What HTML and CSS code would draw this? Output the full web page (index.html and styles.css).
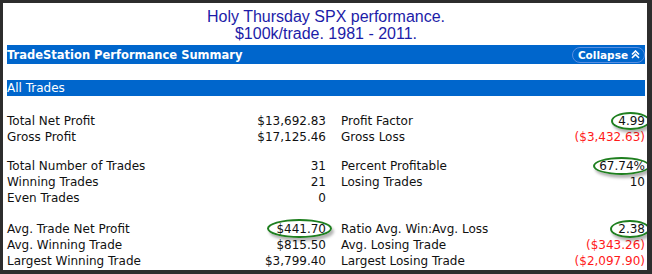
FILE: index.html
```html
<!DOCTYPE html>
<html>
<head>
<meta charset="utf-8">
<link rel="stylesheet" href="styles.css">
</head>
<body>
<div class="frame">
  <div class="title">
    <div>Holy Thursday SPX performance.</div>
    <div>$100k/trade. 1981 - 2011.</div>
  </div>
  <div class="bar head">
    <span class="head-title">TradeStation Performance Summary</span>
    <span class="collapse">Collapse
      <svg class="chev" width="9" height="9" viewBox="0 0 9 9"><path d="M1 4.5 L4.5 1 L8 4.5 M1 8 L4.5 4.5 L8 8" fill="none" stroke="#fff" stroke-width="1.6"/></svg>
    </span>
  </div>
  <div class="bar sub">All Trades</div>

  <div class="grid g1">
    <div class="cell"><span>Total Net Profit</span><span>$13,692.83</span></div>
    <div class="cell"><span>Profit Factor</span><span class="mark m1">4.99</span></div>
    <div class="cell"><span>Gross Profit</span><span>$17,125.46</span></div>
    <div class="cell"><span>Gross Loss</span><span class="neg">($3,432.63)</span></div>
  </div>

  <div class="grid g2">
    <div class="cell"><span>Total Number of Trades</span><span>31</span></div>
    <div class="cell"><span>Percent Profitable</span><span class="mark m2">67.74%</span></div>
    <div class="cell"><span>Winning Trades</span><span>21</span></div>
    <div class="cell"><span>Losing Trades</span><span>10</span></div>
    <div class="cell"><span>Even Trades</span><span>0</span></div>
    <div class="cell"></div>
  </div>

  <div class="grid g3">
    <div class="cell"><span>Avg. Trade Net Profit</span><span class="mark m3">$441.70</span></div>
    <div class="cell"><span>Ratio Avg. Win:Avg. Loss</span><span class="mark m4">2.38</span></div>
    <div class="cell"><span>Avg. Winning Trade</span><span>$815.50</span></div>
    <div class="cell"><span>Avg. Losing Trade</span><span class="neg">($343.26)</span></div>
    <div class="cell"><span>Largest Winning Trade</span><span>$3,799.40</span></div>
    <div class="cell"><span>Largest Losing Trade</span><span class="neg">($2,097.90)</span></div>
  </div>
</div>
</body>
</html>
```
FILE: styles.css
```css
html, body {
  margin: 0;
  padding: 0;
  background: #2d2d2d;
}
.frame {
  margin: 3px 5px 0 3px;
  height: 267px;
  background: #fff;
  padding: 0 2px 0 4px;
  overflow: hidden;
  box-sizing: border-box;
}
.title {
  padding-top: 5px;
  font-family: "Liberation Sans", Arial, sans-serif;
  font-size: 16px;
  line-height: 17px;
  color: #1c1ca8;
  text-align: center;
  margin-bottom: 3px;
}
.bar {
  background: #0066cc;
  color: #fff;
  font-family: "DejaVu Sans", sans-serif;
  font-size: 11px;
}
.head {
  height: 19px;
  display: flex;
  align-items: center;
  justify-content: space-between;
}
.head-title {
  font-weight: bold;
  font-size: 11.5px;
}
.collapse {
  display: flex;
  align-items: center;
  gap: 3px;
  height: 14px;
  padding: 0 4px 0 5px;
  border: 1px solid #5b8fe0;
  border-radius: 8px;
  font-weight: bold;
  font-size: 10.5px;
  margin-right: 0;
}
.sub {
  margin-top: 16px;
  height: 16px;
  line-height: 16px;
  font-size: 12px;
}
.grid {
  display: grid;
  grid-template-columns: 319px 304px;
  column-gap: 15px;
  font-family: "DejaVu Sans", sans-serif;
  font-size: 12px;
  color: #111;
}
.g1 { margin-top: 17px; }
.g2 { margin-top: 13px; }
.g3 { margin-top: 15px; }
.cell {
  display: flex;
  justify-content: space-between;
  height: 16px;
  line-height: 16px;
}
.neg { color: #ff1a1a; }
.mark { position: relative; }
.mark::after {
  content: "";
  position: absolute;
  border: 2px solid #1f7f1f;
  border-radius: 50%;
  box-shadow: 2px 3px 3px rgba(0,0,0,0.3);
}
.m1::after { left: -7px; right: -5px; top: -1px; bottom: -1px; }
.m2::after { left: -6px; right: -5px; top: -1px; bottom: -1px; }
.m3::after { left: -9px; right: -6px; top: -2px; bottom: -1px; }
.m4::after { left: -8px; right: -5px; top: -1px; bottom: -1px; }
```
